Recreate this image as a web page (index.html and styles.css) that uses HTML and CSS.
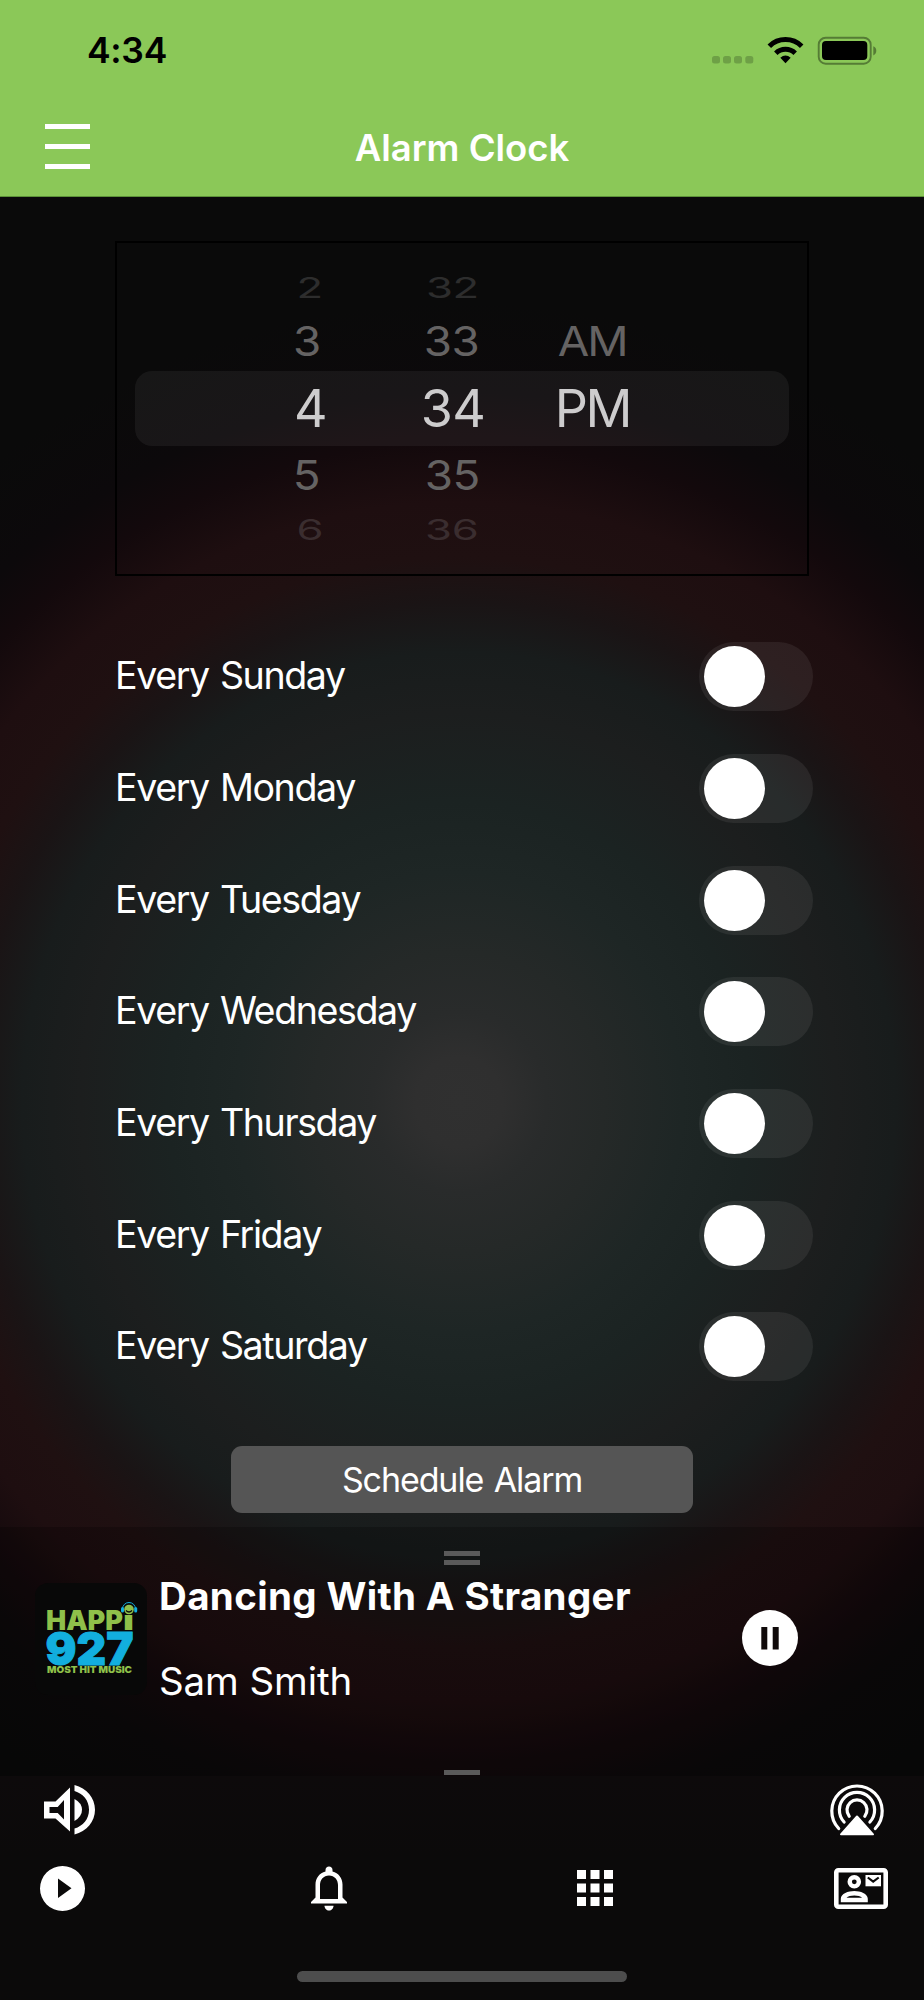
FILE: index.html
```html
<!DOCTYPE html>
<html lang="en">
<head>
<meta charset="utf-8">
<title>Alarm Clock</title>
<link rel="stylesheet" href="styles.css">
</head>
<body>
<div class="app">
  <header class="header">
    <div class="status">
      <span class="time">4:34</span>
      <svg class="status-icons" width="166" height="30" viewBox="0 0 166 30">
        <g fill="#6ea046"><rect x="0" y="20" width="8" height="7.5" rx="2.5"/><rect x="11" y="20" width="8" height="7.5" rx="2.5"/><rect x="22" y="20" width="8" height="7.5" rx="2.5"/><rect x="33.3" y="20" width="8" height="7.5" rx="2.5"/></g>
        <g fill="none" stroke="#000" stroke-width="5"><path d="M57.3 10.2A23 23 0 0 1 89.7 10.2"/><path d="M63.8 17.2A14 14 0 0 1 83.2 17.2"/></g>
        <path d="M68.3 21.8Q73.5 17 78.7 21.8L73.5 27.2Z"/>
        <rect x="106.7" y="1.7" width="52" height="26" rx="7" fill="none" stroke="#557c35" stroke-width="1.9"/>
        <rect x="110" y="5" width="45.3" height="19" rx="4"/>
        <path d="M161.3 10.2q3 1.2 3 4.6t-3 4.6z" fill="#557c35"/>
      </svg>
    </div>
    <div class="nav">
      <div class="burger"><i></i><i></i><i></i></div>
      <h1 class="nav-title">Alarm Clock</h1>
    </div>
  </header>

  <main class="main">
    <div class="picker">
      <div class="wheel">
        <span class="far hour-far"><b>2</b></span><span class="near hour-near"><b>3</b></span><span class="current hour-now"><b>4</b></span><span class="near hour-near"><b>5</b></span><span class="far low hour-far"><b>6</b></span>
      </div>
      <div class="wheel minutes">
        <span class="far"><b>32</b></span><span class="near"><b>33</b></span><span class="current"><b>34</b></span><span class="near"><b>35</b></span><span class="far low"><b>36</b></span>
      </div>
      <div class="wheel period">
        <span class="far"></span><span class="near"><b>AM</b></span><span class="current"><b>PM</b></span>
      </div>
    </div>
    <div class="days">
      <div class="day"><span>Every Sunday</span><div class="switch"></div></div>
      <div class="day"><span>Every Monday</span><div class="switch"></div></div>
      <div class="day"><span>Every Tuesday</span><div class="switch"></div></div>
      <div class="day"><span>Every Wednesday</span><div class="switch"></div></div>
      <div class="day"><span>Every Thursday</span><div class="switch"></div></div>
      <div class="day"><span>Every Friday</span><div class="switch"></div></div>
      <div class="day"><span>Every Saturday</span><div class="switch"></div></div>
    </div>
    <div class="schedule">Schedule Alarm</div>
  </main>

  <section class="player">
    <div class="grip"><i></i><i></i></div>
    <div class="track">
      <svg class="cover" width="112" height="112" viewBox="0 0 112 112">
        <rect width="112" height="112" rx="13" fill="#080808"/>
        <g font-family="Inter, sans-serif" font-weight="900">
          <g fill="#8fc04a">
            <text x="11" y="46.5" font-size="26.5" textLength="77" lengthAdjust="spacingAndGlyphs">HAPP</text>
            <text x="88" y="46.5" font-size="26.5" textLength="11" lengthAdjust="spacingAndGlyphs">ı</text>
            <text x="12" y="89.5" font-size="9.5" textLength="85" lengthAdjust="spacingAndGlyphs">MOST HIT MUSIC</text>
          </g>
          <text x="10.5" y="81.5" font-size="46" fill="#12aede" stroke="#12aede" stroke-width="1" textLength="88" lengthAdjust="spacingAndGlyphs">927</text>
        </g>
        <circle cx="94" cy="26.5" r="4.8" fill="#8fc04a"/>
        <path d="M91 27.5q3 3 6 0" fill="none" stroke="#080808" stroke-width="1.2"/>
        <path d="M87.5 26a6.5 6.5 0 0 1 13 0" fill="none" stroke="#12aede" stroke-width="1"/>
        <rect x="86" y="24" width="3" height="5.5" rx="1.5" fill="#12aede"/><rect x="99.2" y="24" width="3" height="5.5" rx="1.5" fill="#12aede"/>
      </svg>
      <div class="song">
        <div class="song-title">Dancing With A Stranger</div>
        <div class="song-artist">Sam Smith</div>
      </div>
      <svg class="pause" width="56" height="56" viewBox="0 0 56 56"><circle cx="28" cy="28" r="28" fill="#fff"/><path d="M19.3 17h6v22.5h-6zM30.7 17h6v22.5h-6z" fill="#100a0a"/></svg>
    </div>
    <div class="grip single"><i></i></div>
  </section>

  <footer class="footer">
    <div class="audio-row">
      <svg width="51" height="50" viewBox="0 0 51 50" fill="#fff">
        <path fill-rule="evenodd" d="M0 16.5H11.5L26 2.5V46.5L11.5 33.5H0ZM5.5 22V28H13.7L20 34.5V15L13.7 22Z"/>
        <path d="M30.5 14Q38 18 38 24.8T30.5 36Z"/>
        <path d="M30.5 0C42.5 3 51 13 51 24.7S42.5 46.5 30.5 49.5V43.5C39 41 45 34 45 24.7S39 8.5 30.5 6Z"/>
      </svg>
      <svg width="54" height="54" viewBox="0 0 54 54" fill="none" stroke="#fff" stroke-width="3.2" stroke-linecap="round">
        <path d="M8.7 45.5A25.2 25.2 0 1 1 45.3 45.5"/>
        <path d="M14.1 39A17.6 17.6 0 1 1 39.9 39"/>
        <path d="M19.2 33.2A10 10 0 1 1 34.8 33.2"/>
        <path d="M27 33.5L43 51.3H11Z" fill="#fff" stroke-width="2" stroke-linejoin="round"/>
      </svg>
    </div>
    <div class="tabs">
      <svg width="45" height="45" viewBox="0 0 45 45"><path fill="#fff" fill-rule="evenodd" d="M22.5 0A22.5 22.5 0 1 1 22.5 45A22.5 22.5 0 1 1 22.5 0ZM18 12.5V32L31.5 22.3Z"/></svg>
      <svg width="36" height="45" viewBox="0 0 36 45" fill="#fff">
        <path fill-rule="evenodd" d="M18 0.5c2 0 3.5 1.5 3.5 3.5v1.5C27.5 7 31.5 12 31.5 18.5V31.5L36 36v1.5H0V36L4.5 31.5V18.5C4.5 12 8.5 7 14.5 5.5V4C14.5 2 16 .5 18 .5ZM18 9.5c-5.500 0-9 4.400-9 9.500V33H27V19c0-5.100-3.500-9.500-9-9.500Z"/>
        <path d="M13.5 39.7h9c0 2.6-2 4.8-4.5 4.8s-4.5-2.200-4.500-4.800z"/>
      </svg>
      <svg class="apps" width="36" height="36" viewBox="0 0 36 36" fill="#fff"><path d="M0 0h9v9H0zM13.5 0h9v9h-9zM27 0h9v9h-9zM0 13.5h9v9H0zM13.5 13.5h9v9h-9zM27 13.5h9v9h-9zM0 27h9v9H0zM13.5 27h9v9h-9zM27 27h9v9h-9z"/></svg>
      <svg width="54" height="41" viewBox="0 0 54 41">
        <rect x="2.3" y="2.3" width="49.4" height="36.4" rx="2" fill="none" stroke="#fff" stroke-width="4.6"/>
        <path fill="#fff" fill-rule="evenodd" d="M20.3 7a6.8 6.8 0 1 1 0 13.6a6.8 6.8 0 1 1 0-13.6zM20.3 11.4a2.4 2.4 0 1 0 0 4.8a2.4 2.4 0 1 0 0-4.8z"/>
        <path fill="#fff" fill-rule="evenodd" d="M6.8 34.2v-3.5c0-5 7.5-7.700 13.500-7.700s13.500 2.700 13.500 7.700v3.500zM12.500 29.700h15.600c-1.500-1.400-4.500-2.200-7.800-2.200s-6.300.8-7.800 2.200z"/>
        <rect x="31.5" y="7" width="15.5" height="11.3" fill="#fff"/>
        <path d="M33.8 9.5L39.2 13.7L44.7 9.5" fill="none" stroke="#0b0a0a" stroke-width="2.2"/>
      </svg>
    </div>
    <div class="home"></div>
  </footer>
</div>
</body>
</html>
```
FILE: styles.css
```css
* { box-sizing: border-box; }
body { margin: 0; background: #090909; color: #fff; font-family: Inter, "Liberation Sans", sans-serif; }
.app {
  width: 924px; height: 2000px; overflow: hidden;
  display: flex; flex-direction: column;
  background: radial-gradient(ellipse 970px 1000px at 459px 1102px,
    #303030 0, #2f2f2f 4.5%, #292b2b 9%, #252928 15%, #1e2625 23%,
    #1b2322 30%, #1c1e1e 39%, #181c1c 45%, #1a1415 50%, #1f1011 54.5%,
    #1e0e10 60%, #13090c 66%, #0c090b 71%, #0a0a0a 80%, #0a0a0a 100%);
}
.header { height: 197px; flex: none; background: #8bc858; border-bottom: 1px solid #5c9238; display: flex; flex-direction: column; }
.status { height: 100px; display: flex; justify-content: space-between; align-items: flex-start; padding: 36px 46px 0 87px; }
.time { font-size: 35.5px; line-height: 30px; font-weight: 600; color: #000; letter-spacing: -0.3px; }
.nav { height: 96px; display: grid; grid-template-columns: 45px 1fr 45px; align-items: center; padding: 0 45px; }
.burger { display: flex; flex-direction: column; gap: 15px; padding-bottom: 3px; }
.burger i { height: 5px; background: #fff; }
.nav-title { margin: 0; text-align: center; font-size: 36.5px; line-height: 44px; font-weight: 600; }

.main { height: 1330px; flex: none; padding: 44px 111px 0 115px; }
.picker {
  width: 694px; height: 335px; border: 2px solid #000; padding: 20px 0 0 119px;
  display: grid; grid-template-columns: 145px 144px 135px;
  position: relative;
}
.picker::before { content: ""; position: absolute; left: 18px; top: 128px; width: 654px; height: 75px; border-radius: 17px; background: rgba(255,255,255,.055); }
.wheel { display: flex; flex-direction: column; position: relative; }
.wheel span { display: flex; align-items: center; justify-content: center; font-size: 52px; line-height: 1; }
.wheel b { display: block; font-weight: 400; letter-spacing: -0.5px; }
.wheel.period b { letter-spacing: -2.4px; }
.far { height: 49px; color: #2d2d2d; }
.low { color: #3a2d2f; }
.far b { transform: scale(.84, .55); }
.near { height: 59px; color: #656363; }
.near b { transform: scale(.88, .8); }
.minutes .near, .minutes .far { padding-right: 2px; }
.current { height: 75px; color: #cdcccd; }
.hour-far { padding-left: 2px; }
.hour-near { padding-right: 4px; }
.hour-now { padding-left: 4px; }

.days { padding-top: 45px; }
.day { height: 111.7px; display: flex; justify-content: space-between; align-items: center; font-size: 37.6px; line-height: 46px; letter-spacing: -1.4px; word-spacing: 2px; }
.day span { padding-bottom: 1px; }
.switch { width: 114px; height: 69px; border-radius: 35px; background: rgba(255,255,255,.07); padding: 4px 4.5px; }
.switch::before { content: ""; display: block; width: 61px; height: 61px; border-radius: 50%; background: #fff; }
.schedule { width: 462px; height: 67px; margin: 43px 0 0 116px; border-radius: 11px; background: #555; text-align: center; font-size: 34px; line-height: 67px; letter-spacing: -1.1px; word-spacing: 2px; }

.player { height: 249px; flex: none; background: rgba(0,0,0,.22); display: flex; flex-direction: column; padding-top: 24px; }
.grip { display: flex; flex-direction: column; align-items: center; gap: 4px; height: 14px; }
.grip i { width: 36px; height: 5px; background: #5a5a5a; }
.track { height: 205px; display: flex; padding: 18px 126px 0 35px; }
.song { flex: 1; padding-left: 12px; }
.song-title { margin-top: -10px; font-size: 38.5px; line-height: 46px; font-weight: 700; letter-spacing: 0.35px; white-space: nowrap; }
.song-artist { margin-top: 39px; font-size: 38.5px; line-height: 46px; letter-spacing: -0.1px; }
.pause { margin-top: 27px; }
.single { height: 5px; }

.footer { height: 224px; flex: none; background: linear-gradient(#0d0a0b, #0b0a0a 80px); padding-top: 7px; display: flex; flex-direction: column; }
.audio-row { height: 54px; display: flex; justify-content: space-between; align-items: center; padding: 0 40px 0 44px; }
.tabs { height: 102px; display: flex; justify-content: space-between; align-items: center; padding: 0 35.5px 0 40px; }
.apps { margin: 0 -4.5px 0 4.5px; }
.home { width: 330px; height: 11px; border-radius: 6px; background: #4d4d4d; margin: 32px auto 0; }
```
